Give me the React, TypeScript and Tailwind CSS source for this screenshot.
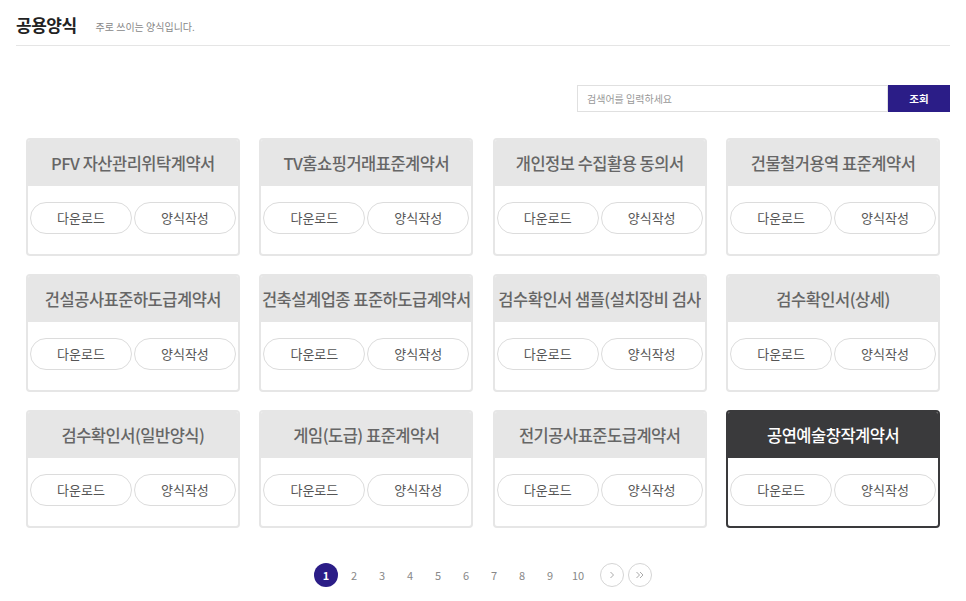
import React from "react";

const items = [
  "PFV 자산관리위탁계약서",
  "TV홈쇼핑거래표준계약서",
  "개인정보 수집활용 동의서",
  "건물철거용역 표준계약서",
  "건설공사표준하도급계약서",
  "건축설계업종 표준하도급계약서",
  "검수확인서 샘플(설치장비 검사",
  "검수확인서(상세)",
  "검수확인서(일반양식)",
  "게임(도급) 표준계약서",
  "전기공사표준도급계약서",
  "공연예술창작계약서",
];

function Card({ title, active }: { title: string; active: boolean }) {
  return (
    <div
      className={`h-[118px] rounded-[4px] border-2 flex flex-col overflow-hidden ${
        active ? "border-[#3a3a3c]" : "border-[#e6e6e6]"
      }`}
    >
      <div
        className={`h-[46px] shrink-0 flex items-center justify-center overflow-hidden whitespace-nowrap text-[16.5px] font-medium tracking-[-0.5px] ${
          active ? "bg-[#3a3a3c] text-white" : "bg-[#e6e6e6] text-[#666]"
        }`}
      >
        <span className="block overflow-hidden">{title}</span>
      </div>
      <div className="flex gap-[2px] px-[2px] pt-[16px]">
        <button className="flex-1 h-[32px] rounded-full border border-[#dcdcdc] bg-white text-[13px] text-[#555]">
          다운로드
        </button>
        <button className="flex-1 h-[32px] rounded-full border border-[#dcdcdc] bg-white text-[13px] text-[#555]">
          양식작성
        </button>
      </div>
    </div>
  );
}

export default function App() {
  return (
    <div
      className="w-[966px] h-[601px] bg-white px-[16px] overflow-hidden"
      style={{ fontFamily: '"Noto Sans CJK KR", "Noto Sans", sans-serif' }}
    >
      <div className="flex items-center h-[46px] border-b border-[#e5e5e5] pt-[4px]">
        <h1 className="text-[17px] font-bold text-[#222] tracking-[-0.5px]">공용양식</h1>
        <span className="ml-[19px] text-[10px] text-[#888] mt-[3px]">주로 쓰이는 양식입니다.</span>
      </div>
      <div className="flex justify-end mt-[39px]">
        <div className="w-[311px] h-[27px] border border-[#e0e0e0] flex items-center px-[9px] text-[10px] text-[#999]">
          검색어를 입력하세요
        </div>
        <button className="w-[62px] h-[27px] bg-[#2b1d87] text-white text-[10.5px] font-bold">조회</button>
      </div>
      <div className="grid grid-cols-4 gap-x-[19.5px] gap-y-[18px] px-[10px] mt-[26px]">
        {items.map((t, i) => (
          <Card key={i} title={t} active={i === 11} />
        ))}
      </div>
      <div className="flex justify-center items-center mt-[35px] text-[11px] text-[#888]">
        <div className="w-[24px] h-[24px] rounded-full bg-[#2b1d87] text-white font-bold flex items-center justify-center">
          1
        </div>
        {[2, 3, 4, 5, 6, 7, 8, 9, 10].map((n) => (
          <div key={n} className="w-[24px] h-[24px] ml-[4px] flex items-center justify-center">
            {n}
          </div>
        ))}
        <div className="w-[24px] h-[24px] ml-[10px] rounded-full border border-[#d5d5d5] flex items-center justify-center">
          <svg width="8" height="8" viewBox="0 0 8 8" fill="none" stroke="#aaa" strokeWidth="1">
            <path d="M2.5 1 L5.5 4 L2.5 7" />
          </svg>
        </div>
        <div className="w-[24px] h-[24px] ml-[4px] rounded-full border border-[#d5d5d5] flex items-center justify-center">
          <svg width="10" height="8" viewBox="0 0 10 8" fill="none" stroke="#aaa" strokeWidth="1">
            <path d="M1.5 1 L4.5 4 L1.5 7" />
            <path d="M5 1 L8 4 L5 7" />
          </svg>
        </div>
      </div>
    </div>
  );
}
